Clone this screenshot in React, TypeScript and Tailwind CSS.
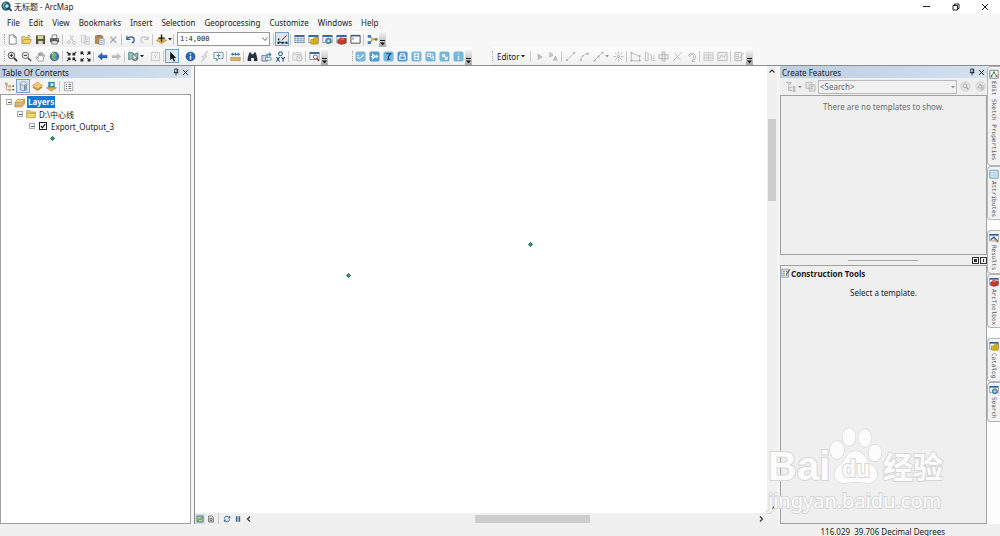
import type { ReactNode } from "react";

const menus = ["File", "Edit", "View", "Bookmarks", "Insert", "Selection", "Geoprocessing", "Customize", "Windows", "Help"];

const win = (
  <>
    <rect x="1" y="1.5" width="10" height="8" fill="#f4f8fb" stroke="#5b6b7c" strokeWidth=".7" />
    <path d="M.8 1.2h10.4v2H.8z" fill="#2f629f" />
  </>
);

// All drawings share a 12 x 12 grid
const icons: Record<string, ReactNode> = {
  new: <path d="M2.5 1h5l2.5 2.5V11H2.5zM7.5 1v2.5H10" fill="#fff" stroke="#666" strokeWidth=".8" />,
  open: (
    <>
      <path d="M1 10V3h3l1 1h4v2" fill="#f3d97c" stroke="#9a7a2c" strokeWidth=".7" />
      <path d="M1 10.5 3 6h8.5l-2 4.5z" fill="#f7cf56" stroke="#9a7a2c" strokeWidth=".6" />
      <path d="M7 2.5Q9 .5 10.5 3" fill="none" stroke="#5e7d3a" />
    </>
  ),
  save: (
    <>
      <path d="M1 1.5h10V11H1z" fill="#55552f" />
      <path d="M3 2h6v3.5H3z" fill="#d9d8a6" />
      <path d="M3.5 7.5h5V11h-5z" fill="#d6d6d6" />
    </>
  ),
  print: (
    <>
      <path d="M3.5 1h5v4h-5z" fill="#fff" stroke="#444" strokeWidth=".7" />
      <path d="M1 4.5h10v4.5H1z" fill="#5d6168" />
      <path d="M3 7.5h6V11H3z" fill="#eee" stroke="#444" strokeWidth=".7" />
      <path d="M8.5 6h1.5" stroke="#e0c043" />
    </>
  ),
  cut: <path d="M4 1l4 7M8.5 1.5 4 7M3 7.5a1.5 1.5 0 1 0 .1 0M8.5 8a1.5 1.5 0 1 0 .1 0" fill="none" stroke="#b9b9b9" />,
  copy: <path d="M1.5 1.5h5V9h-5zM4.5 3.5H10V11H4.5zM6 6h3M6 8h3" fill="#f2f2f2" stroke="#bdbdbd" strokeWidth=".8" />,
  paste: (
    <>
      <path d="M1.5 2h8v8.5h-8z" fill="#c08a4c" stroke="#8a5d2c" strokeWidth=".6" />
      <path d="M3.5 1h4v2h-4z" fill="#777" />
      <path d="M5.5 5H11v6.500H5.5zM6.5 7H10M6.5 9H10" fill="#eef3fa" stroke="#667a9b" strokeWidth=".6" />
    </>
  ),
  del: <path d="M2.5 3 9 9.5M9 3 2.5 9.5" stroke="#a6a6a6" strokeWidth="1.3" />,
  undo: <path d="M2 2v4h4M2.5 5.5C4 2.5 10 2 10 6.5 10 8.5 8.5 9.5 7.5 9.5" fill="none" stroke="#2e5f92" strokeWidth="1.3" />,
  redo: <path d="M10 2v4H6M9.5 5.5C8 2.500 2 2 2 6.5 2 8.5 3.5 9.5 4.5 9.5" fill="none" stroke="#c3c3c3" strokeWidth="1.2" />,
  addData: (
    <>
      <path d="M6 3.5 11.500 7 6 10.5.5 7z" fill="#e6b548" stroke="#8e6520" strokeWidth=".5" />
      <path d="M6 .5v8M2.5 4.5h7" stroke="#222" strokeWidth="1.5" />
    </>
  ),
  editor: (
    <>
      <path d="M1.5 9.5h9M1.5 7l3 2.5M5 7l5-5" stroke="#444" strokeWidth=".9" fill="none" />
      <path d="M6 6l4.500-4.500" stroke="#c9503c" strokeWidth="1.2" />
      <path d="M.5 8.5h2v2h-2zM5 8.5h2v2H5zM9.5 8.5h2v2h-2zM1 5h1.5v1.5H1z" fill="#111" />
    </>
  ),
  table: <>{win}<path d="M1 5.2h10M1 7.3h10M4.3 3v6.5M7.7 3v6.5" stroke="#6c96c2" strokeWidth=".8" /></>,
  catalog: <>{win}<path d="M3 6h3V4.5h2.5v-1H11V11H3z" fill="#e5c21e" stroke="#8b7511" strokeWidth=".6" /><path d="M6 6v5M8.5 5v6" stroke="#8b7511" strokeWidth=".6" /></>,
  search: <>{win}<circle cx="7" cy="7.5" r="3" fill="#62b5a4" stroke="#2b6ba0" /><circle cx="7" cy="7.5" r="1" fill="#d9f4ea" /></>,
  toolbox: <>{win}<path d="M2 6.5 5 4l6 1v5l-5 1.5-4-1.5z" fill="#c6372d" stroke="#7e1f1a" strokeWidth=".5" /><path d="M4.5 5.5h4" stroke="#f0a49a" strokeWidth=".8" /></>,
  results: <>{win}<path d="M2 8l4-3 5 6" fill="none" stroke="#2d4f82" strokeWidth="1.4" /><path d="M6 7l4 4" stroke="#dba63b" strokeWidth="1.5" /></>,
  python: (
    <>
      <path d="M1 1.5h10v8.500H1z" fill="#fff" stroke="#444" strokeWidth="1" />
      <path d="M1 2h10" stroke="#34537c" strokeWidth="1.3" />
      <path d="M2.5 4 4 5.200 2.5 6.4" fill="none" stroke="#333" strokeWidth=".7" />
    </>
  ),
  model: (
    <>
      <path d="M3 2.5 6 6l4-.5M3 9.5 6 6" stroke="#333" fill="none" />
      <path d="M.8 1h3.500v3H.8zM.8 8h3.500v3H.8z" fill="#3d78b8" />
      <rect x="4.5" y="4.3" width="3" height="3" fill="#e0b932" />
      <circle cx="10" cy="5.7" r="1.7" fill="#4e9c4c" />
    </>
  ),
  zoomIn: <><circle cx="4.8" cy="4.8" r="3.5" fill="#eee" stroke="#444" /><path d="M7.5 7.5 11 11" stroke="#333" strokeWidth="1.8" /><path d="M3 4.8h3.600M4.8 3v3.600" stroke="#222" /></>,
  zoomOut: <><circle cx="4.8" cy="4.8" r="3.5" fill="#eee" stroke="#666" /><path d="M7.5 7.5 11 11" stroke="#555" strokeWidth="1.6" /><path d="M3 4.8h3.600" stroke="#222" /></>,
  pan: <path d="M3.5 11 1 7l1-.8L3.5 8V3l1-.5.8 3v-4h1.2v4L7.5 2l1 .3L8.300 6l1.200-2 1 .5L9 9v2z" fill="#fafafa" stroke="#777" strokeWidth=".7" />,
  globe: <><circle cx="6" cy="6" r="4.8" fill="#3f7fbd" stroke="#345" strokeWidth=".6" /><path d="M3 2.5 6.5 2l2 2-2 2.500L8 9l-2 1-3-3z" fill="#79b65a" /><path d="M3 3l2-1" stroke="#e5f3ff" /></>,
  fixIn: <path d="M1 1l3 3M4.300 1.800v2.500H1.800M11 1 8 4M7.700 1.800v2.500h2.500M1 11l3-3M4.300 10.200V7.700H1.800M11 11 8 8M7.700 10.200V7.700h2.500" fill="none" stroke="#222" strokeWidth="1.3" />,
  fixOut: <path d="M1.300 1.300 4 4M1.200 3.700V1.200h2.500M10.700 1.300 8 4M10.800 3.700V1.200H8.300M1.300 10.700 4 8M1.200 8.300v2.500h2.500M10.700 10.700 8 8M10.800 8.300v2.500H8.300" fill="none" stroke="#222" strokeWidth="1.3" />,
  back: <path d="M1 6l4.500-4v2.500H11v3H5.500V10z" fill="#2c66b5" stroke="#1c4b8d" strokeWidth=".4" />,
  forward: <path d="M11 6 6.500 2v2.500H1v3h5.500V10z" fill="#bdbdbd" />,
  select: (
    <>
      <path d="M.8 1.500h4l2 2 4-1.500v7l-4 1.500-3-2-3 1z" fill="#8cc6b9" stroke="#43647b" strokeWidth=".8" />
      <path d="M5.500 3v7l1.700-1.500 1.200 2.300 1-.6-1-2.200h2z" fill="#fff" stroke="#333" strokeWidth=".6" />
    </>
  ),
  clear: <path d="M1.500 1.500h9v9h-9zM4 4l2 2 2-2M6 6v2" fill="#f1f1f1" stroke="#c0c0c0" strokeWidth=".9" />,
  arrow: <path d="M3.500.5v9.500L5.800 8l1.500 3.500 1.500-.7-1.500-3.300H10z" fill="#111" />,
  identify: <><circle cx="6" cy="6" r="5" fill="#2766b3" stroke="#174683" strokeWidth=".5" /><path d="M6 5.200v4M6 2.500v1.500" stroke="#fff" strokeWidth="1.5" /></>,
  bolt: <path d="M8.500.5 3 6.500h2.500L3 11.500l6-6H6.500l3-5z" fill="#e8e8e8" stroke="#bbb" strokeWidth=".7" />,
  popup: <><path d="M1 1.500h10v6.800H6L4 11V8.300H1z" fill="#edf4f8" stroke="#56768a" strokeWidth=".8" /><path d="M6 3v4M4 5h4" stroke="#3b7b9e" strokeWidth=".9" /></>,
  measure: <><path d="M.8 7h10.400v3.500H.8z" fill="#d9b266" stroke="#8d6b2b" strokeWidth=".5" /><path d="M1 3.500h10M3 2v3M9 2v3M6 2v3" stroke="#29619a" strokeWidth="1.1" /></>,
  find: <path d="M2.500 1.500h2.200v2h2.600v-2h2.200L11.300 8v3H7.500V7.500h-3V11H.7V8z" fill="#26313d" />,
  route: <><path d="M1 5h6v6H1z" fill="#c7dcec" stroke="#447" strokeWidth=".7" /><path d="M4 3h5V.8L11.500 4 9 6.500V5" fill="#3d86b8" /><path d="M5 7h6v3H5z" fill="#fff" stroke="#39789e" strokeWidth=".8" /></>,
  xy: <><circle cx="6" cy="3" r="2" fill="none" stroke="#2f74a3" strokeWidth="1.3" /><path d="M1.500 6.500l3.500 5M5 6.500l-3.500 5M7 6.500 8.800 9l1.800-2.500M8.800 9v2.500" fill="none" stroke="#1e5485" strokeWidth="1.2" /></>,
  time: <><path d="M1 2h9v8H1zM1 4h9" fill="#f0f0f0" stroke="#bcbcbc" strokeWidth=".8" /><circle cx="8" cy="8" r="3" fill="#eee" stroke="#bbb" /><path d="M8 6.500V8h1.500" stroke="#aaa" fill="none" strokeWidth=".7" /></>,
  viewer: <>{win}<circle cx="7" cy="6.5" r="2.2" fill="#fff" stroke="#813b3b" strokeWidth=".9" /><path d="M8.500 8l2.500 3" stroke="#633" strokeWidth="1.3" /></>,
  // editor toolbar, disabled state
  edArrow: <path d="M4 2.500v7.500l5.500-3.500z" fill="#bcbcbc" />,
  edText: <path d="M2 1.500v5l3.500-2zM6 10.500 8 5.500l2 5M6.500 9h3" fill="#ccc" stroke="#b5b5b5" />,
  line: <><path d="M2 10 10 2" stroke="#bbb" /><path d="M1 9h2v2H1zM9 1h2v2H9z" fill="#aaa" /></>,
  arc: <><path d="M2 10Q2.500 3.500 9 3" stroke="#bbb" fill="none" /><path d="M1 9h2v2H1zM8.500 2h2v2h-2zM3.500 4.500H5V6H3.500z" fill="#aaa" /></>,
  mid: <><path d="M1.500 10.500 10.500 1.500" stroke="#bbb" fill="none" /><path d="M.7 9.500h2v2h-2zM5 5h2v2H5zM9.500.7h2v2h-2z" fill="#aaa" /></>,
  burst: <path d="M6 .5v3M6 8.500v3M.5 6h3M8.500 6h3M2 2l2 2M8 8l2 2M10 2 8 4M4 8l-2 2M5 5h2v2H5z" stroke="#b9b9b9" fill="none" />,
  poly: <><path d="M1.500 2v8.500h9v-5z" fill="none" stroke="#bbb" /><path d="M.7 1h2v2h-2zM.7 9.500h2v2h-2zM9.500 9.500h2v2h-2zM9.500 4.500h2v2h-2z" fill="#b0b0b0" /></>,
  reshape: <path d="M1.500 1.500v9h3v-8l-3-1M6 3l2 2v5.500M9.500 5.500h2M9.500 8h2M9.500 10.500h2" fill="none" stroke="#b9b9b9" />,
  cutPoly: <path d="M1 4h10v4.500H1zM4.500 1h3v10h-3z" fill="#ebebeb" stroke="#b5b5b5" />,
  split: <path d="M1.500 10.500l9-9M3 2.500l6 7" stroke="#b8b8b8" />,
  rotate: <path d="M2.500 5.500a4 4 0 1 1 5.500 4.500M4 6.500a2.300 2.300 0 1 1 3.500 1.500M9.500 11.500h-3l1.500-3" fill="none" stroke="#b5b5b5" />,
  attrs: <path d="M1 1.500h10v9H1zM1 4.500h10M1 7.500h10M6 1.500v9" fill="#e9e9e9" stroke="#c3c3c3" strokeWidth=".8" />,
  sketch: <path d="M1 1.500h10v9H1zM2.500 8.500 5 4l2.500 3 2-3.500" fill="#ededed" stroke="#bababa" />,
  create: <path d="M1 1.500h7.500v9H1zM2.500 4h3M2.500 6h3M2.500 8h3M6 8l5-6" fill="#eee" stroke="#b8b8b8" />,
  // table of contents
  drawOrder: <><path d="M2.500 3v6.500H6M2.500 5.500H6" stroke="#888" fill="none" strokeWidth=".7" /><path d="M1 1.500h3v3H1zM5 4.500h2.500V7H5zM5 8.500h2.500V11H5z" fill="#d8a95b" /><path d="M9 5.500h2M9 9.500h2" stroke="#444" strokeWidth="1.3" /></>,
  source: <><path d="M2.500 2.500v7q3.500 2.500 7 0v-7z" fill="#d5dbe2" stroke="#566b88" strokeWidth=".7" /><ellipse cx="6" cy="2.7" rx="3.5" ry="1.7" fill="#fff" stroke="#566b88" strokeWidth=".7" /><path d="M7.500 4.500V10" stroke="#53779d" strokeWidth="1.5" /></>,
  visible: <><path d="M6 3 11.500 7 6 11 .5 7z" fill="#c68f33" /><path d="M6 1 11.500 5 6 9 .5 5z" fill="#efc775" stroke="#ad7b2b" strokeWidth=".5" /></>,
  selection: <><path d="M6 4 11.500 7.500 6 11 .5 7.500z" fill="#dcaa4b" stroke="#956b2b" strokeWidth=".5" /><path d="M2.500 1h7v6h-7z" fill="#2f88a8" /><path d="M5 2.500h3v3H5z" fill="#d9f0f4" /></>,
  options: <><path d="M1.500 1.500h9v9h-9z" fill="#fff" stroke="#888" strokeWidth=".7" /><path d="M3 4h1.500M6 4h3M3 6h1.500M6 6h3M3 8.300h1.500M6 8.300h3" stroke="#49637b" /></>,
  layers: <><path d="M1 6l3-3.500h7.500v5L8.500 11H1z" fill="#f0d08a" stroke="#91702d" strokeWidth=".6" /><path d="M1 6h7.500l3-3.500M1 7.700h7.500L11.500 4M1 9.300h7.500l3-3.300" fill="none" stroke="#a5813a" strokeWidth=".6" /></>,
  folder: <path d="M.8 10.500V2h4l1 1.500h5.400v7zM.8 5h10.400" fill="#f0d96e" stroke="#9c8938" strokeWidth=".8" />,
  tree: <path d="M1 1.500h6L4 5v5.500h4M4 7h4M9 6h2v2H9zM9 9.500h2v2H9z" fill="#ddd" stroke="#b0b0b0" strokeWidth=".9" />,
  arrange: <path d="M1 1.500h6.500V8H1zM4.500 4H11v7H4.500zM6 6h3.500M6 8.500h3.500" fill="#e8e8e8" stroke="#b3b3b3" strokeWidth=".9" />,
  find2: <><circle cx="6" cy="6" r="5" fill="#e5e5e5" stroke="#ccc" /><circle cx="5.5" cy="5.3" r="2" fill="#fff" stroke="#999" /><path d="M7 7l2 2" stroke="#999" strokeWidth="1.3" /></>,
  reset: <><circle cx="6" cy="6" r="5" fill="#e8e8e8" stroke="#ccc" /><path d="M3 7.500 5.500 3 8 7.500zM6 5h3v4H6" fill="#ddd" stroke="#aaa" strokeWidth=".8" /></>,
  construct: <><path d="M1 1.500h8V11H1z" fill="#e2eef8" stroke="#67839c" strokeWidth=".8" /><path d="M2.500 4h2M2.500 6.200h2M2.500 8.500h2" stroke="#b58d2c" strokeWidth="1.3" /><path d="M6 4h2M6 8.500h2" stroke="#3c78ac" strokeWidth="1.2" /><path d="M6 8l5-6.500" stroke="#705f3a" strokeWidth="1.3" /></>,
  sketchTab: <><path d="M1 1.500h10V11H1z" fill="#fff" stroke="#667" /><path d="M3 8.500 6 4l3 4.500" fill="none" stroke="#3a9a52" strokeWidth="1.2" /><path d="M2 7.500h2v2H2zM5 3h2v2H5z" fill="#2b7e40" /><path d="M8 7.500h2v2H8z" fill="#cc3a33" /></>,
  attrTab: <><path d="M1 1.500h10V11H1z" fill="#d6ebf8" stroke="#6a93b3" /><path d="M6 2v9M1 4.500h10M1 7.500h10" stroke="#a4cbe2" /></>,
  dataView: <path d="M1.500 1.500h9v9h-9zM3.500 8.500l2-3L7 7l2-3.500" fill="#b6cf9b" stroke="#456b4f" strokeWidth="1.2" />,
  layoutView: <path d="M2.500 1.500h5l2 2v7h-7zM4.500 5h3v3.500h-3z" fill="#eee" stroke="#555" strokeWidth="1.2" />,
  refresh: <path d="M2 5.500A4 4 0 0 1 9.500 4M10 1.500v3H7M10 6.500A4 4 0 0 1 2.500 8M2 10.500v-3h3" fill="none" stroke="#2d5c92" strokeWidth="1.4" />,
  pause: <path d="M2.800 2h2.400v8H2.800zM6.800 2h2.400v8H6.800z" fill="#2e64a3" />,
  pin: <path d="M4 1.500h4.500V7H4zM2.500 7h7M6 7v4M7.700 1.500V7" fill="none" stroke="#222" strokeWidth="1.2" />,
  close: <path d="M2 2l8 8M10 2l-8 8" stroke="#222" strokeWidth="1.7" />,
};

const blueGlyphs: Record<string, string> = {
  "Trace network": "M2.500 7q2 2 4 0t3-3M2.500 5h2",
  "Flow direction": "M2 6h3M4 3.500v5L7 6zM8 4v4M9.500 5v2",
  "Add flag": "M3.500 3h5L6 6v3M4.500 9h3",
  "Lock": "M3 5.500h6V9H3zM4 5V3h4v2",
  "Layers list": "M3 3h6M3 6h6M3 9h6M4 2v8M8 2v8",
  "Convert": "M3 3h3v3H3zM6 8l3-2v4M8 3v2",
  "Connect": "M4 4h2v2H4zM7 7h2v2H7zM6 6l2 2",
  "Info": "M6 5.500V9M6 3v1M5 9h2",
};

function Icon({ name, className = "size-3" }: { name: string; className?: string }) {
  return (
    <svg viewBox="0 0 12 12" className={`shrink-0 ${className}`} aria-hidden="true">
      {icons[name]}
    </svg>
  );
}

function Tool({ name, label, active = false }: { name: string; label: string; active?: boolean }) {
  return (
    <button
      type="button"
      aria-label={label}
      className={`flex h-[14px] w-[14px] shrink-0 items-center justify-center border ${
        active ? "border-[#6fa3cc] bg-[#d8e8f5]" : "border-transparent"
      }`}
    >
      <Icon name={name} className="size-[11px]" />
    </button>
  );
}

function Sep() {
  return <span className="mx-px h-[11px] w-px shrink-0 bg-[#c9c9c9]" />;
}

function Dots() {
  return <span className="h-[10px] w-px shrink-0 border-l border-dotted border-[#a5a5a5]" />;
}

function Caret({ gray = false }: { gray?: boolean }) {
  return (
    <svg viewBox="0 0 4 4" className="size-1 shrink-0" aria-hidden="true">
      <path d="M0 1h4L2 3.500z" fill={gray ? "#999" : "#222"} />
    </svg>
  );
}

function Overflow() {
  return (
    <button type="button" aria-label="Toolbar options" className="flex h-[15px] w-[7px] shrink-0 items-end justify-center self-end bg-linear-to-b from-[#f3f3f3] to-[#a9a9a9] pb-px">
      <svg viewBox="0 0 5 6" className="h-[6px] w-[5px]" aria-hidden="true">
        <path d="M0 0h5v1H0zM0 2.500h5L2.500 5.500z" fill="#111" />
      </svg>
    </button>
  );
}

function PanelTitle({ children }: { children: string }) {
  return (
    <div className="flex h-3 shrink-0 items-center bg-linear-to-r from-[#bccde0] to-[#d3e1f0] px-0.5">
      <h2 className="flex-1">{children}</h2>
      <button type="button" aria-label={`Pin ${children}`} className="mr-0.5">
        <Icon name="pin" className="size-[8px]" />
      </button>
      <button type="button" aria-label={`Close ${children}`}>
        <Icon name="close" className="size-[7px]" />
      </button>
    </div>
  );
}

function SideTab({ name, label, className }: { name: string; label: string; className: string }) {
  return (
    <button type="button" className={`flex w-full shrink-0 flex-col items-center gap-0.5 rounded-l-sm border border-r-0 border-[#b5b5b5] bg-[#f3f3f3] pt-0.5 pr-px ${className}`}>
      <Icon name={name} className="size-[10px]" />
      <span className="font-['DejaVu_Sans_Mono',monospace] text-[6px] leading-[10px] text-[#555] [writing-mode:vertical-rl]">{label}</span>
    </button>
  );
}

function Expander() {
  return (
    <button type="button" aria-label="Collapse" className="flex size-[6px] shrink-0 items-center justify-center border border-[#aaa] bg-white">
      <span className="h-px w-[3px] bg-[#555]" />
    </button>
  );
}

function Chevron({ d, label }: { d: string; label: string }) {
  return (
    <button type="button" aria-label={label} className="flex size-[10px] shrink-0 items-center justify-center">
      <svg viewBox="0 0 6 6" className="size-[6px]" aria-hidden="true">
        <path d={d} fill="none" stroke="#333" strokeWidth="1.2" />
      </svg>
    </button>
  );
}

function MapPoint({ className = "" }: { className?: string }) {
  return (
    <svg viewBox="0 0 6 6" className={`size-[5px] ${className}`} aria-hidden="true">
      <path d="M3 .5 5.500 3 3 5.500.5 3z" fill="#2f9b76" stroke="#124637" />
    </svg>
  );
}

function Toolbars() {
  return (
    <div className="shrink-0 border-b border-[#8c8c8c] bg-[#f7f7f7]">
      <div className="flex h-4 items-center">
        <div className="flex h-full items-center bg-linear-to-b from-[#fdfdfd] to-[#efefef] pl-1">
          <Dots />
          <Tool name="new" label="New" />
          <Tool name="open" label="Open" />
          <Tool name="save" label="Save" />
          <Tool name="print" label="Print" />
          <Sep />
          <Tool name="cut" label="Cut" />
          <Tool name="copy" label="Copy" />
          <Tool name="paste" label="Paste" />
          <Tool name="del" label="Delete" />
          <Sep />
          <Tool name="undo" label="Undo" />
          <Tool name="redo" label="Redo" />
          <Sep />
          <Tool name="addData" label="Add Data" />
          <Caret />
          <Sep />
          <div className="relative mx-0.5 flex">
            <select aria-label="Map scale" className="h-[14px] w-[93px] appearance-none border border-[#999] bg-white pl-0.5 font-['DejaVu_Sans_Mono',monospace] text-[7px] leading-3">
              <option>1:4,000</option>
            </select>
            <svg viewBox="0 0 6 6" className="pointer-events-none absolute top-1 right-0.5 size-[6px]" aria-hidden="true">
              <path d="M.5 1.500 3 4.500l2.500-3" fill="none" stroke="#444" strokeWidth=".8" />
            </svg>
          </div>
          <Sep />
          <Tool name="editor" label="Editor Toolbar" active />
          <Sep />
          <Tool name="table" label="Table Of Contents" />
          <Tool name="catalog" label="Catalog" />
          <Tool name="search" label="Search" />
          <Tool name="toolbox" label="ArcToolbox" />
          <Tool name="python" label="Python" />
          <Sep />
          <Tool name="model" label="ModelBuilder" />
          <Overflow />
        </div>
      </div>
      <div className="flex h-[18px] items-center">
        <div className="flex h-full items-center bg-linear-to-b from-[#fdfdfd] to-[#efefef] pl-1">
          <Dots />
          <Tool name="zoomIn" label="Zoom In" />
          <Tool name="zoomOut" label="Zoom Out" />
          <Tool name="pan" label="Pan" />
          <Tool name="globe" label="Full Extent" />
          <Sep />
          <Tool name="fixIn" label="Fixed Zoom In" />
          <Tool name="fixOut" label="Fixed Zoom Out" />
          <Sep />
          <Tool name="back" label="Back" />
          <Tool name="forward" label="Forward" />
          <Sep />
          <Tool name="select" label="Select Features" />
          <Caret />
          <span className="w-1" />
          <Tool name="clear" label="Clear Selection" />
          <Sep />
          <Tool name="arrow" label="Select Elements" active />
          <span className="w-1" />
          <Tool name="identify" label="Identify" />
          <Tool name="bolt" label="Hyperlink" />
          <Tool name="popup" label="HTML Popup" />
          <Sep />
          <Tool name="measure" label="Measure" />
          <Sep />
          <Tool name="find" label="Find" />
          <Tool name="route" label="Find Route" />
          <Tool name="xy" label="Go To XY" />
          <Sep />
          <Tool name="time" label="Time Slider" />
          <Sep />
          <Tool name="viewer" label="Viewer Window" />
          <Overflow />
        </div>
        <div className="ml-6 flex h-full items-center bg-linear-to-b from-[#fdfdfd] to-[#efefef]">
          <Dots />
          {Object.entries(blueGlyphs).map(([label, d]) => (
            <button key={label} type="button" aria-label={label} className="flex h-[14px] w-[14px] items-center justify-center">
              <svg viewBox="0 0 12 12" className="size-[11px]" aria-hidden="true">
                <rect x=".5" y=".5" width="11" height="11" rx="2" fill={label === "Lock" || label === "Flow direction" ? "#4f9bd0" : "#79b6de"} />
                <path d={d} fill="none" stroke={label === "Add flag" ? "#173f66" : "#eef8ff"} strokeWidth="1.2" />
              </svg>
            </button>
          ))}
          <Overflow />
        </div>
        <div className="ml-5 flex h-full items-center bg-linear-to-b from-[#fdfdfd] to-[#efefef]">
          <Dots />
          <button type="button" className="flex items-center gap-0.5 px-1">
            Editor
            <Caret />
          </button>
          <Sep />
          <Tool name="edArrow" label="Edit Tool" />
          <Tool name="edText" label="Edit Annotation" />
          <Sep />
          <Tool name="line" label="Straight Segment" />
          <Tool name="arc" label="End Point Arc" />
          <Tool name="mid" label="Trace" />
          <Caret gray />
          <span className="w-0.5" />
          <Tool name="burst" label="Point" />
          <Sep />
          <Tool name="poly" label="Edit Vertices" />
          <Tool name="reshape" label="Reshape" />
          <Tool name="cutPoly" label="Cut Polygons" />
          <Tool name="split" label="Split" />
          <Tool name="rotate" label="Rotate" />
          <Sep />
          <Tool name="attrs" label="Attributes" />
          <Tool name="sketch" label="Sketch Properties" />
          <Sep />
          <Tool name="create" label="Create Features" />
          <Overflow />
        </div>
      </div>
    </div>
  );
}

function Contents() {
  return (
    <aside className="flex w-[191px] shrink-0 flex-col">
      <PanelTitle>Table Of Contents</PanelTitle>
      <div className="flex h-4 shrink-0 items-center bg-[#f4f4f4] pl-0.5">
        <Tool name="drawOrder" label="List By Drawing Order" />
        <Tool name="source" label="List By Source" active />
        <Tool name="visible" label="List By Visibility" />
        <Tool name="selection" label="List By Selection" />
        <Sep />
        <Tool name="options" label="Options" />
      </div>
      <ul className="flex-1 border border-[#a0a0a0] bg-white pt-px [&>li]:flex [&>li]:h-3 [&>li]:items-center">
        <li className="gap-0.5 pl-[5px]">
          <Expander />
          <Icon name="layers" className="size-[11px]" />
          <span className="bg-[#1079d2] px-px leading-3 font-bold text-white">Layers</span>
        </li>
        <li className="gap-[3px] pl-4">
          <Expander />
          <Icon name="folder" className="size-[10px]" />
          <span>D:\中心线</span>
        </li>
        <li className="gap-1 pl-7">
          <Expander />
          <label className="flex items-center gap-1">
            <span className="relative flex">
              <input type="checkbox" defaultChecked className="peer size-2 appearance-none border border-[#222] bg-white" />
              <svg viewBox="0 0 8 8" className="pointer-events-none absolute inset-0 hidden size-2 peer-checked:block" aria-hidden="true">
                <path d="M2 4l1.500 1.800L6.200 2" fill="none" stroke="#111" strokeWidth="1.2" />
              </svg>
            </span>
            Export_Output_3
          </label>
        </li>
        <li className="pl-[49px]">
          <MapPoint />
        </li>
      </ul>
    </aside>
  );
}

function MapView() {
  return (
    <main className="ml-[3px] flex min-w-0 flex-1 flex-col border-l border-[#8c8c8c] bg-[#f0f0f0]">
      <div className="flex min-h-0 flex-1">
        <div className="relative flex-1 bg-white">
          <MapPoint className="absolute top-[207px] left-[151px]" />
          <MapPoint className="absolute top-[176px] left-[333px]" />
        </div>
        <div className="flex w-[10px] flex-col">
          <Chevron d="M.5 4.500 3 2l2.500 2.500" label="Scroll up" />
          <div className="mx-px mt-[43px] h-[82px] bg-[#cdcdcd]" />
          <div className="flex-1" />
          <Chevron d="M.5 1.500 3 4l2.500-2.500" label="Scroll down" />
        </div>
      </div>
      <div className="flex h-[11px] shrink-0 items-center">
        <button type="button" aria-label="Data View" className="flex size-[10px] items-center justify-center bg-[#c9e0f3]">
          <Icon name="dataView" className="size-[8px]" />
        </button>
        <button type="button" aria-label="Layout View" className="mx-0.5">
          <Icon name="layoutView" className="size-[8px]" />
        </button>
        <Sep />
        <button type="button" aria-label="Refresh" className="mx-[3px]">
          <Icon name="refresh" className="size-[8px]" />
        </button>
        <button type="button" aria-label="Pause Drawing" className="mr-0.5">
          <Icon name="pause" className="size-[8px]" />
        </button>
        <Chevron d="M4 .5 1.500 3 4 5.500" label="Scroll left" />
        <div className="flex flex-1 pl-[38%]">
          <div className="h-2 w-[115px] bg-[#cdcdcd]" />
        </div>
        <Chevron d="M2 .5 4.500 3 2 5.500" label="Scroll right" />
        <span className="w-[11px]" />
      </div>
    </main>
  );
}

function CreateFeatures() {
  return (
    <aside className="ml-[3px] flex w-[207px] shrink-0 flex-col bg-[#efefef]">
      <PanelTitle>Create Features</PanelTitle>
      <div className="flex h-[17px] shrink-0 items-center gap-px pl-[3px]">
        <Tool name="tree" label="Filter" />
        <Caret gray />
        <Tool name="arrange" label="Organize Templates" />
        <div className="relative flex flex-1">
          <select aria-label="Search templates" className="h-[14px] w-full appearance-none border border-[#b9b9b9] bg-[#f1f1f1] pl-px text-[#666]">
            <option>&lt;Search&gt;</option>
          </select>
          <span className="pointer-events-none absolute top-[5px] right-0.5 flex">
            <Caret gray />
          </span>
        </div>
        <Tool name="find2" label="Search" />
        <Tool name="reset" label="Clear Search" />
      </div>
      <div className="h-40 shrink-0 border border-[#9fa3a0] pt-[5px] text-center text-[#6d6d6d]">There are no templates to show.</div>
      <div className="flex h-[10px] shrink-0 items-center">
        <span className="ml-[68px] h-px w-[70px] bg-[#aaa]" />
        <span className="flex-1" />
        <button type="button" aria-label="Collapse pane" className="flex size-[7px] items-center justify-center border border-[#333]">
          <span className="size-[3px] bg-[#333]" />
        </button>
        <button type="button" aria-label="Split pane" className="ml-px flex size-[7px] items-center justify-center border border-[#333]">
          <span className="h-[3px] w-px bg-[#333]" />
        </button>
      </div>
      <section className="flex-1 border border-[#9fa3a0]">
        <h3 className="flex h-[14px] items-center font-bold">
          <Icon name="construct" className="size-[10px]" />
          Construction Tools
        </h3>
        <p className="mt-[7px] text-center">Select a template.</p>
      </section>
    </aside>
  );
}

function Watermark() {
  return (
    <div className="pointer-events-none absolute right-[54px] bottom-[20px] w-[178px] text-[#fcfcfc] [paint-order:stroke] [-webkit-text-stroke:2px_#d6d6d6]" aria-hidden="true">
      <div className="flex h-[60px] items-end font-['Liberation_Sans','Noto_Sans_CJK_SC',sans-serif] font-bold">
        <span className="w-[61px] text-[40px] leading-[38px]">Bai</span>
        <div className="relative h-[60px] w-[54px]">
          <svg viewBox="0 0 54 60" className="size-full">
            <g fill="#fcfcfc" stroke="#d0d0d0">
              <ellipse cx="8" cy="25" rx="7" ry="9" />
              <ellipse cx="20" cy="12" rx="6.5" ry="9" />
              <ellipse cx="36" cy="13" rx="6.5" ry="9" />
              <ellipse cx="46" cy="28" rx="6.5" ry="8.5" />
              <path d="M27 26c8 0 11 10 16 14 8 6 7 17-3 18-5 0-8-1-13-1s-8 1-13 1c-10-1-11-12-3-18 5-5 8-14 16-14z" />
            </g>
          </svg>
          <span className="absolute inset-x-0 bottom-1 text-center text-[23px] leading-6">du</span>
        </div>
        <span className="text-[30px] leading-[35px]">经验</span>
      </div>
      <div className="font-['Noto_Sans',sans-serif] text-[20px] leading-[31px]">jingyan.baidu.com</div>
    </div>
  );
}

export default function App() {
  return (
    <div className="relative flex h-screen flex-col overflow-hidden bg-[#f5f5f5] font-['Noto_Sans','Noto_Sans_CJK_SC',sans-serif] text-[8px] leading-[11px] text-[#1b1b1b]">
      <header className="flex h-[13px] shrink-0 items-center bg-white px-px">
        <svg viewBox="0 0 12 12" className="mr-0.5 size-[11px]" aria-hidden="true">
          <circle cx="5.5" cy="5.5" r="5" fill="#1e5b7d" />
          <path d="M2 3l3-1.500L7 3 5 6l1 2-2 1-2-3z" fill="#67b594" />
          <circle cx="6.5" cy="5.5" r="2.5" fill="#bfe4ee" stroke="#123c59" />
          <path d="M8.500 7.500 11.500 11" stroke="#123c59" strokeWidth="1.8" />
        </svg>
        <h1 className="flex-1">无标题 - ArcMap</h1>
        <div className="flex gap-[21px] pr-[10px]">
          <button type="button" aria-label="Minimize" className="flex size-2 items-center">
            <span className="h-px w-[7px] bg-[#222]" />
          </button>
          <button type="button" aria-label="Restore">
            <svg viewBox="0 0 8 8" className="size-2" aria-hidden="true">
              <path d="M1 2.500h4.500V7H1zM2.500 2.500V1H7v4.500H5.500" fill="none" stroke="#222" />
            </svg>
          </button>
          <button type="button" aria-label="Close">
            <svg viewBox="0 0 8 8" className="size-2" aria-hidden="true">
              <path d="M1 1l6 6M7 1 1 7" stroke="#222" />
            </svg>
          </button>
        </div>
      </header>
      <nav className="flex h-[18px] shrink-0 items-center gap-[9px] bg-[#f7f7f7] pl-[7px]">
        {menus.map((menu) => (
          <button key={menu} type="button">{menu}</button>
        ))}
      </nav>
      <Toolbars />
      <div className="flex min-h-0 flex-1">
        <Contents />
        <MapView />
        <CreateFeatures />
        <nav className="flex w-[13px] shrink-0 flex-col bg-[#fdfdfd]">
          <SideTab name="sketchTab" label="Edit Sketch Properties" className="h-[100px]" />
          <SideTab name="attrTab" label="Attributes" className="h-[54px]" />
          <SideTab name="results" label="Results" className="mt-[10px] h-[44px]" />
          <SideTab name="toolbox" label="ArcToolbox" className="h-[54px]" />
          <SideTab name="catalog" label="Catalog" className="mt-[10px] h-[44px]" />
          <SideTab name="search" label="Search" className="h-[40px]" />
        </nav>
      </div>
      <footer className="flex h-3 shrink-0 items-end justify-end bg-[#f0f0f0] pr-[55px]">
        <span className="leading-[9px] whitespace-pre">116.029  39.706 Decimal Degrees</span>
      </footer>
      <Watermark />
    </div>
  );
}
